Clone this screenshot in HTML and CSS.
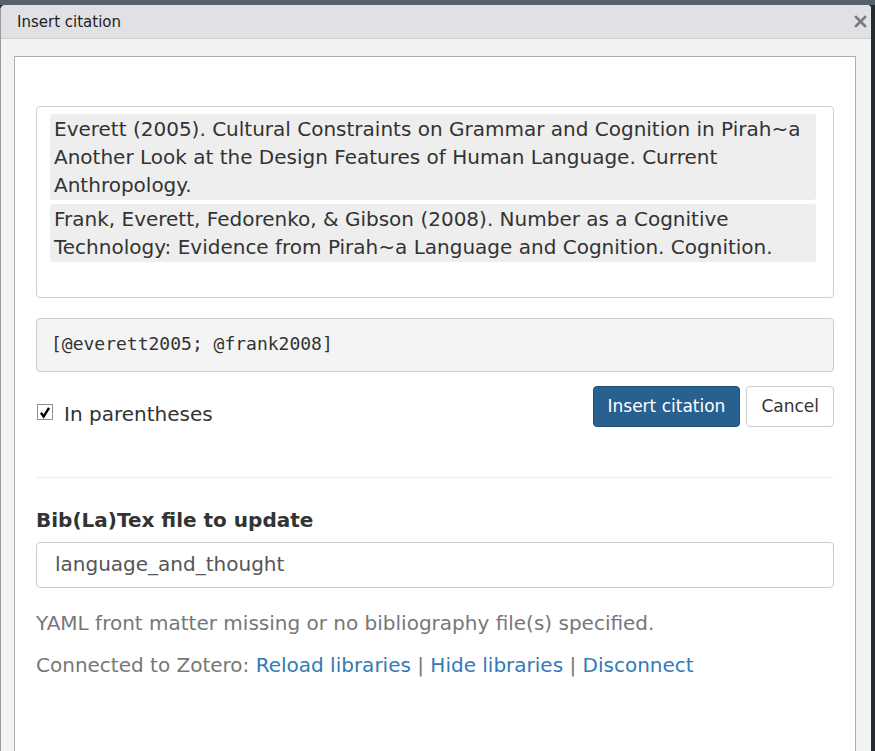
FILE: index.html
```html
<!DOCTYPE html>
<html>
<head>
<meta charset="utf-8">
<link rel="stylesheet" href="styles.css">
</head>
<body>
<div class="topstrip"></div>
<div class="dialog">
  <div class="titlebar">
    <span class="title">Insert citation</span>
    <svg class="close" width="13" height="13" viewBox="0 0 13 13"><path d="M2 2 L11 11 M11 2 L2 11" stroke="#7a7a7a" stroke-width="2.6" stroke-linecap="square"/></svg>
  </div>
  <div class="dbody">
    <div class="panel">
      <div class="list">
        <div class="item">Everett (2005). Cultural Constraints on Grammar and Cognition in Pirah~a Another Look at the Design Features of Human Language. Current Anthropology.</div>
        <div class="item">Frank, Everett, Fedorenko, &amp; Gibson (2008). Number as a Cognitive Technology: Evidence from Pirah~a Language and Cognition. Cognition.</div>
      </div>
      <div class="code">[@everett2005; @frank2008]</div>
      <div class="actions">
        <label class="check">
          <span class="box"><svg width="12" height="13" viewBox="0 0 12 13"><path d="M2 6.8 L4.6 10.6 L10 1.8" fill="none" stroke="#000" stroke-width="2.4"/></svg></span>
          <span>In parentheses</span>
        </label>
        <div class="buttons">
          <button class="btn primary">Insert citation</button>
          <button class="btn">Cancel</button>
        </div>
      </div>
      <div class="rule"></div>
      <div class="heading">Bib(La)Tex file to update</div>
      <div class="input">language_and_thought</div>
      <p class="muted">YAML front matter missing or no bibliography file(s) specified.</p>
      <p class="muted">Connected to Zotero: <a>Reload libraries</a> | <a>Hide libraries</a> | <a>Disconnect</a></p>
    </div>
  </div>
</div>
</body>
</html>
```
FILE: styles.css
```css
html, body {
  margin: 0;
  height: 100%;
  overflow: hidden;
}
body {
  background: #262b30;
  font-family: "DejaVu Sans", sans-serif;
  color: #333;
}
.topstrip {
  height: 5px;
  background: #56616b;
}
.dialog {
  width: 871px;
  height: 746px;
  background: #f1f2f2;
  border-left: 1px solid #9a9a9a;
  border-top-left-radius: 5px;
  border-top-right-radius: 4px;
  display: flex;
  flex-direction: column;
  box-sizing: border-box;
  overflow: hidden;
}
.titlebar {
  height: 33px;
  background: #e0e1e5;
  border-bottom: 1px solid #d0d1d4;
  display: flex;
  align-items: center;
  justify-content: space-between;
  padding: 0 4px 0 16px;
  flex-shrink: 0;
}
.title {
  font-size: 15px;
  color: #1e1e1e;
}
.close {
  margin-top: -1px;
}
.dbody {
  flex: 1;
  padding: 17px 15px 0 13px;
}
.panel {
  background: #fff;
  border: 1px solid #adadad;
  border-bottom: none;
  height: 100%;
  box-sizing: border-box;
  padding: 49px 21px 0 21px;
}
.list {
  border: 1px solid #cfcfcf;
  border-radius: 4px;
  height: 192px;
  box-sizing: border-box;
  padding: 7px 17px 0 13px;
}
.item {
  background: #eeeeee;
  border-radius: 3px;
  font-size: 20px;
  line-height: 28px;
  padding: 1px 4px;
  margin-bottom: 4px;
  color: #333;
}
.code {
  margin-top: 20px;
  height: 54px;
  box-sizing: border-box;
  background: #f4f4f4;
  border: 1px solid #cccccc;
  border-radius: 4px;
  display: flex;
  align-items: center;
  padding: 0 0 3px 14px;
  font-family: "DejaVu Sans Mono", monospace;
  font-size: 18px;
  color: #333;
}
.actions {
  margin-top: 14px;
  display: flex;
  justify-content: space-between;
  align-items: flex-start;
}
.check {
  display: flex;
  align-items: center;
  font-size: 20px;
  line-height: 24px;
  margin-top: 16px;
}
.box {
  width: 16px;
  height: 16px;
  border: 1px solid #8f8f8f;
  box-sizing: border-box;
  background: #fff;
  display: flex;
  align-items: center;
  justify-content: center;
  margin: 0 11px 0 1px;
  position: relative;
  top: -2px;
}
.box svg {
  flex-shrink: 0;
}
.buttons {
  display: flex;
  gap: 6px;
}
.btn {
  font-family: "DejaVu Sans", sans-serif;
  font-size: 17px;
  height: 41px;
  padding: 0 14px 2px 14px;
  border: 1px solid #cccccc;
  border-radius: 4px;
  background: #fff;
  color: #333;
}
.btn.primary {
  background: #286090;
  border-color: #204d74;
  color: #fff;
}
.rule {
  margin-top: 50px;
  border-top: 1px solid #eeeeee;
}
.heading {
  margin-top: 31px;
  font-weight: bold;
  font-size: 20px;
  line-height: 22px;
}
.input {
  margin-top: 11px;
  height: 46px;
  box-sizing: border-box;
  border: 1px solid #cccccc;
  border-radius: 4px;
  display: flex;
  align-items: center;
  padding: 0 0 2px 18px;
  font-size: 20px;
  color: #555;
}
.muted {
  color: #777;
  font-size: 20px;
  line-height: 22px;
  margin: 24px 0 0 0;
}
.muted + .muted {
  margin-top: 20px;
}
.muted a {
  color: #337ab7;
}
```
